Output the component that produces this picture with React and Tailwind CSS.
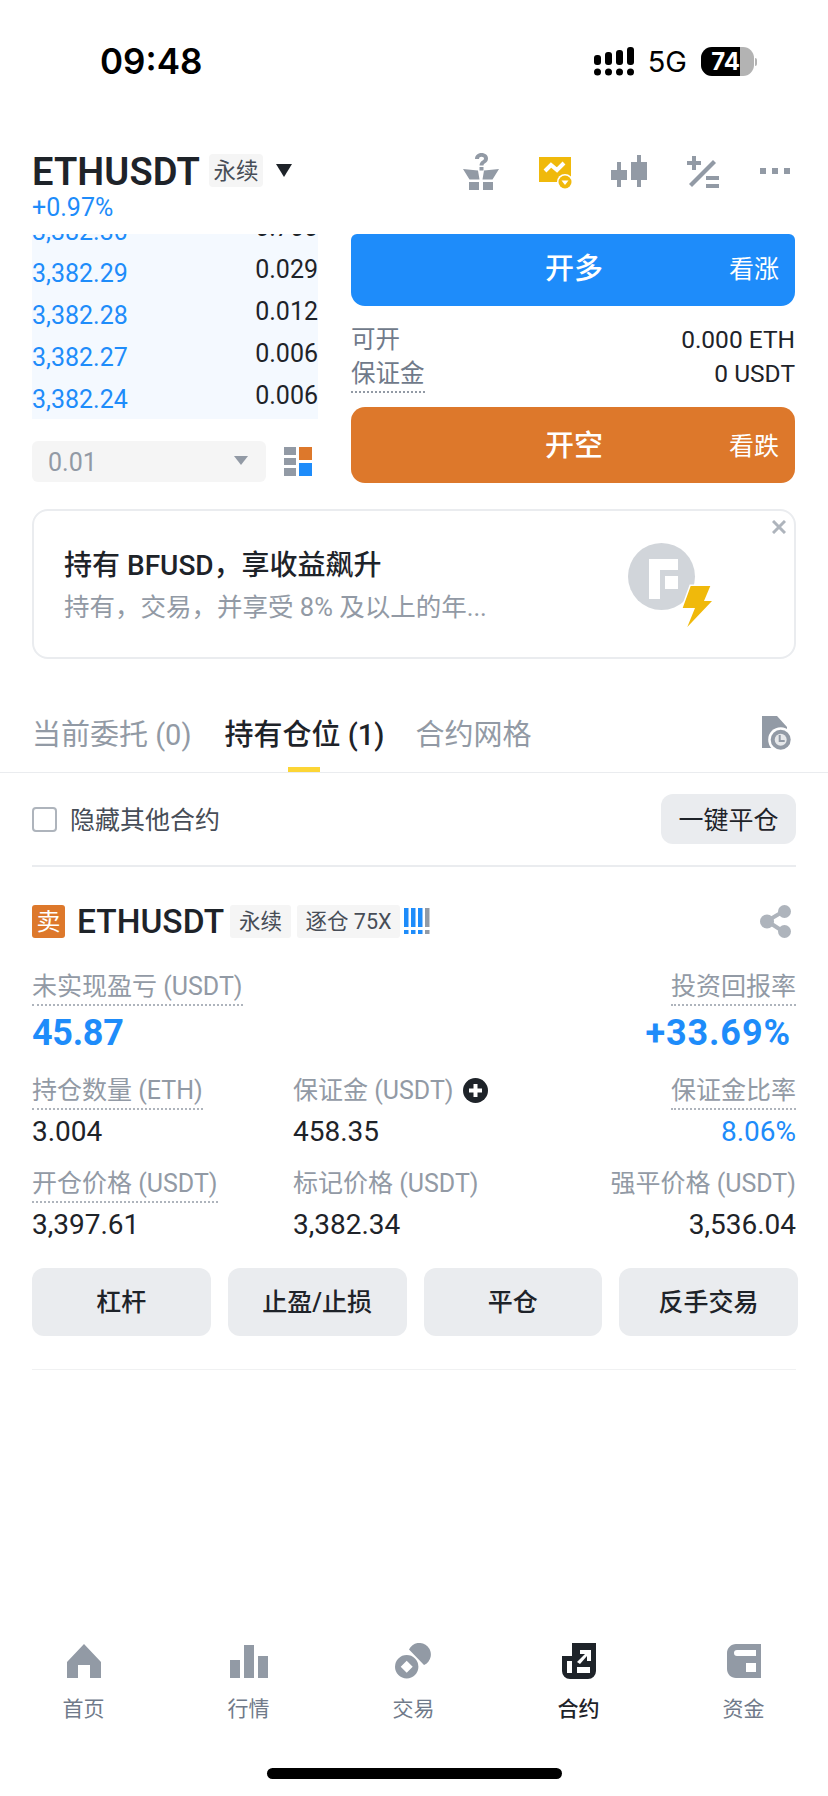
import React from 'react';

const BLUE = 'text-[#1e8cfa]';
const DARK = 'text-[#1e2329]';

function Candles() {
    return (
        <svg width="36" height="32" viewBox="0 0 36 32" fill="#929aa5">
            <path d="M6 7h4v8h6v10h-6v7H6v-7H0V15h6z" />
            <path d="M26 0h4v7h6v18h-6v7h-4v-7h-6V7h6z" />
        </svg>
    );
}

function HeaderIcons() {
    return (
        <div className="flex items-start ml-auto mr-[6px] mt-[-1px]">
            <svg width="36" height="37" viewBox="0 0 36 37" fill="#929aa5">
                <path d="M12 6c0-3.500 2.800-6 6.500-6S25 2.300 25 5.500c0 2.500-1.500 3.700-3 4.800-1 .7-1.500 1.200-1.500 2.300h-4c0-2.500 1.200-3.700 2.700-4.800 1-.7 1.800-1.200 1.800-2.300S20 3.700 18.500 3.700 16 4.600 16 6z" />
                <rect x="16.500" y="14" width="4" height="3.500" />
                <path d="M0 16l15 1.500 1.500 9H6.500zM36 16l-15 1.500-1.500 9h10z" />
                <rect x="6" y="29" width="10" height="8" />
                <rect x="20" y="29" width="10" height="8" />
            </svg>
            <svg className="ml-[40px]" width="34" height="37" viewBox="0 0 34 37">
                <path d="M0 4h32v25H0z" fill="#f0b90b" />
                <path d="M6 18l6-6 6 5 7-7" fill="none" stroke="#fff" strokeWidth="4" />
                <circle cx="26" cy="29" r="8" fill="#fff" />
                <circle cx="26" cy="29" r="6.500" fill="#f0b90b" />
                <path d="M22.500 27.500h7L26 32z" fill="#fff" />
            </svg>
            <div className="ml-[38px] mt-[2px]"><Candles /></div>
            <svg className="ml-[40px] mt-[3px]" width="32" height="32" viewBox="0 0 32 32" fill="#929aa5">
                <path d="M5 0h4v5h5v4H9v5H5V9H0V5h5z" />
                <path d="M2 28L26 4l3 3L5 31z" />
                <rect x="19" y="20" width="13" height="4" />
                <rect x="19" y="28" width="13" height="4" />
            </svg>
            <div className="ml-[41px] mt-[15px] flex gap-[6px]">
                <div className="w-[6px] h-[6px] bg-[#929aa5]" />
                <div className="w-[6px] h-[6px] bg-[#929aa5]" />
                <div className="w-[6px] h-[6px] bg-[#929aa5]" />
            </div>
        </div>
    );
}

function StatusBar() {
    return (
        <div className="h-[154px] flex items-start pt-[47px] pl-[100px] pr-[71px] text-black">
            <div className="text-[35px] leading-[29px] font-semibold font-['Inter',sans-serif]">09:48</div>
            <div className="ml-auto flex items-center h-[29px]">
                <svg width="41" height="29" viewBox="0 0 41 29" fill="#000">
                    <rect x="0" y="8" width="7" height="10" rx="3" />
                    <rect x="11" y="5" width="7" height="13" rx="3" />
                    <rect x="22" y="3" width="7" height="15" rx="3" />
                    <rect x="33" y="0" width="7" height="18" rx="3" />
                    <circle cx="3.500" cy="25" r="3.500" />
                    <circle cx="14.500" cy="25" r="3.500" />
                    <circle cx="25.500" cy="25" r="3.500" />
                    <circle cx="36.500" cy="25" r="3.500" />
                </svg>
                <div className="ml-[13px] text-[29px] font-['Inter',sans-serif]">5G</div>
                <div className="ml-[14px] w-[53px] h-[29px] rounded-[11px] overflow-hidden flex bg-[#b3b3b3]">
                    <div className="w-[39px] h-full bg-black text-white text-[24px] leading-[29px] font-bold font-['Inter',sans-serif] text-right">74</div>
                </div>
                <div className="ml-[1px] w-[2px] h-[8px] rounded-r bg-[#b3b3b3]" />
            </div>
        </div>
    );
}

function Header() {
    return (
        <div className="h-[80px] flex items-start px-[32px]">
            <div>
                <div className="flex items-center h-[33px]">
                    <div className={`pt-[3px] text-[38px] font-semibold tracking-[0.1px] ${DARK}`}>ETHUSDT</div>
                    <div className="ml-[9px] pt-[2px] h-[33px] w-[54px] rounded-[4px] bg-[#f5f5f5] flex items-center justify-center text-[22.5px] text-[#474d57]">永续</div>
                    <svg className="ml-[13px]" width="16" height="13" viewBox="0 0 16 13"><path d="M0 0h16L8 13z" fill="#1e2329" /></svg>
                </div>
                <div className={`text-[25px] leading-[28px] mt-[7px] ${BLUE}`}>+0.97%</div>
            </div>
            <HeaderIcons />
        </div>
    );
}

const rows = [
    { price: '3,382.30', qty: '0.700', first: true },
    { price: '3,382.29', qty: '0.029' },
    { price: '3,382.28', qty: '0.012' },
    { price: '3,382.27', qty: '0.006' },
    { price: '3,382.24', qty: '0.006' },
];

function OrderBook() {
    return (
        <div className="w-[286px]">
            <div className="h-[185px] overflow-hidden bg-[#f4f9ff]">
                {rows.map((row) => (
                    <div key={row.price} className={`h-[42px] flex justify-between text-[25px] leading-[28px] ${row.first ? 'mt-[-20px]' : ''}`}>
                        <div className={`pt-[4px] ${BLUE}`}>{row.price}</div>
                        <div className={DARK}>{row.qty}</div>
                    </div>
                ))}
            </div>
            <div className="mt-[22px] flex items-center">
                <div className="w-[234px] h-[41px] pt-[2px] rounded-[6px] bg-[#f5f5f5] flex items-center px-[16px] text-[25px] text-[#929aa5]">
                    0.01
                    <svg className="ml-auto mr-[2px] mb-[5px]" width="14" height="9" viewBox="0 0 14 9"><path d="M0 0h14L7 9z" fill="#929aa5" /></svg>
                </div>
                <svg className="ml-[18px]" width="28" height="29" viewBox="0 0 28 29">
                    <rect x="0" y="0" width="12" height="8" fill="#929aa5" />
                    <rect x="0" y="11" width="12" height="7" fill="#929aa5" />
                    <rect x="0" y="21" width="12" height="8" fill="#929aa5" />
                    <rect x="15" y="0" width="13" height="13" fill="#dd782b" />
                    <rect x="15" y="16" width="13" height="13" fill="#1e8cfa" />
                </svg>
            </div>
        </div>
    );
}

function TradeButton({ label, hint, className }) {
    return (
        <div className={`flex items-center text-white ${className}`}>
            <div className="w-[158px]" />
            <div className="w-[130px] text-center text-[29px] font-medium">{label}</div>
            <div className="ml-auto mr-[16px] text-[25px]">{hint}</div>
        </div>
    );
}

function OrderForm() {
    return (
        <div className="ml-[33px] w-[444px]">
            <TradeButton label="开多" hint="看涨" className="h-[72px] rounded-b-[14px] rounded-t-[6px] bg-[#1e8cfa]" />
            <div className="h-[101px] pt-[17px] text-[24.500px] leading-[34px]">
                <div className="flex justify-between">
                    <span className="text-[#707a8a]">可开</span>
                    <span className={DARK}>0.000 ETH</span>
                </div>
                <div className="flex justify-between">
                    <span className="text-[#707a8a] h-[36px] border-b-2 border-dotted border-[#929aa5]">保证金</span>
                    <span className={DARK}>0 USDT</span>
                </div>
            </div>
            <TradeButton label="开空" hint="看跌" className="h-[76px] pt-[3px] rounded-[14px] bg-[#dd782b]" />
        </div>
    );
}

function Banner() {
    return (
        <div className="relative mx-[32px] mt-[26px] h-[150px] w-[764px] rounded-[16px] border-2 border-[#eaecef] flex items-center pl-[30px]">
            <div className="pt-[3px]">
                <div className={`text-[28px] leading-[38px] font-medium ${DARK}`}>持有 BFUSD，享收益飙升</div>
                <div className="mt-[5px] text-[25.5px] leading-[34px] text-[#929aa5]">持有，交易，并享受 8% 及以上的年...</div>
            </div>
            <svg className="ml-auto mr-[81px] mt-[3px]" width="85" height="85" viewBox="0 0 85 85">
                <circle cx="33.500" cy="33.500" r="33.500" fill="#d1d5da" />
                <path d="M21 16h29v11H32v29H21z" fill="#fff" />
                <rect x="37" y="33" width="13" height="13" fill="#fff" />
                <path d="M62.700 43H82.300L76 58h8L59.300 84 67 65H54.700z" fill="#f0b90b" stroke="#fff" strokeWidth="3" paintOrder="stroke" />
            </svg>
            <svg className="absolute right-[8px] top-[9px]" width="14" height="14" viewBox="0 0 14 14">
                <path d="M1 1l12 12M13 1L1 13" stroke="#aeb4bc" strokeWidth="3" />
            </svg>
        </div>
    );
}

function Tabs() {
    return (
        <div className="mt-[56px] border-b border-[#eaecef] h-[58px] px-[32px] flex items-start">
            <div className="text-[29px] leading-[40px] text-[#929aa5]">当前委托 (0)</div>
            <div className="ml-[33px] flex flex-col items-center">
                <div className={`text-[29px] leading-[40px] font-medium ${DARK}`}>持有仓位 (1)</div>
                <div className="mt-[12px] w-[32px] h-[5px] bg-[#fcd535]" />
            </div>
            <div className="ml-[31px] text-[29px] leading-[40px] text-[#929aa5]">合约网格</div>
            <svg className="ml-auto mr-[4px] mt-[1px]" width="30" height="34" viewBox="0 0 30 34" fill="#929aa5">
                <path d="M0 0h15l10 11v21H0z" />
                <circle cx="18.700" cy="23.700" r="12.500" fill="#fff" />
                <circle cx="18.700" cy="23.700" r="10" />
                <circle cx="18.700" cy="23.700" r="6" fill="#e6e8ea" />
                <path d="M17.700 19v6h5" fill="none" stroke="#929aa5" strokeWidth="2" />
            </svg>
        </div>
    );
}

function PositionToolbar() {
    return (
        <div className="mx-[32px] h-[94px] border-b-2 border-[#eaecef] flex items-center">
            <div className="w-[25px] h-[25px] rounded-[4px] border-2 border-[#aeb4bc]" />
            <div className="ml-[13px] pt-[3px] text-[25px] text-[#474d57]">隐藏其他合约</div>
            <div className={`ml-auto w-[135px] h-[50px] pt-[3px] rounded-[12px] bg-[#eaecef] flex items-center justify-center text-[25px] ${DARK}`}>一键平仓</div>
        </div>
    );
}

function Tag({ children, className }) {
    return <div className={`h-[33px] pt-[1px] rounded-[3px] bg-[#f5f5f5] flex items-center justify-center text-[21.5px] text-[#474d57] ${className}`}>{children}</div>;
}

function PositionTitle() {
    return (
        <div className="flex items-center h-[33px]">
            <div className="w-[33px] h-[33px] rounded-[3px] bg-[#dd782b] text-white text-[24px] flex items-center justify-center">卖</div>
            <div className={`ml-[12px] pt-[1px] w-[153px] text-[33.5px] font-medium ${DARK}`}>ETHUSDT</div>
            <Tag className="w-[61px]">永续</Tag>
            <Tag className="ml-[6px] w-[103px]">逐仓 75X</Tag>
            <svg className="ml-[4px]" width="26" height="27" viewBox="0 0 26 27" fill="#1e8cfa">
                <rect x="0" y="0" width="4.500" height="19" /><rect x="0" y="22" width="4.500" height="4" />
                <rect x="7" y="0" width="4.500" height="19" /><rect x="7" y="22" width="4.500" height="4" />
                <rect x="14" y="0" width="4.500" height="19" /><rect x="14" y="22" width="4.500" height="4" />
                <rect x="21" y="0" width="4.500" height="19" fill="#929aa5" /><rect x="21" y="22" width="4.500" height="4" fill="#929aa5" />
            </svg>
            <svg className="ml-auto mr-[5px]" width="31" height="33" viewBox="0 0 31 33" fill="#aeb4bc">
                <path d="M24 6L7 16l17 11" fill="none" stroke="#aeb4bc" strokeWidth="4" />
                <circle cx="24.500" cy="6.500" r="6.500" />
                <circle cx="7" cy="16.500" r="7" />
                <circle cx="24.500" cy="26.500" r="6.500" />
            </svg>
        </div>
    );
}

function Label({ children, dotted }) {
    return (
        <div className={`w-fit h-[34px] text-[25px] leading-[30px] text-[#929aa5] ${dotted ? 'border-b-2 border-dotted border-[#aeb4bc]' : ''}`}>
            {children}
        </div>
    );
}

function Value({ children, color = DARK }) {
    return <div className={`mt-[6px] text-[28px] leading-[32px] ${color}`}>{children}</div>;
}

function Position() {
    return (
        <div className="mx-[32px]">
            <div className="pt-[38px]"><PositionTitle /></div>
            <div className="mt-[34px] flex justify-between">
                <div>
                    <Label dotted>未实现盈亏 (USDT)</Label>
                    <div className={`mt-[4px] text-[36px] leading-[46px] font-bold tracking-[-0.3px] ${BLUE}`}>45.87</div>
                </div>
                <div className="flex flex-col items-end">
                    <Label dotted>投资回报率</Label>
                    <div className={`mt-[4px] mr-[5px] text-[36px] leading-[46px] font-bold tracking-[0.9px] ${BLUE}`}>+33.69%</div>
                </div>
            </div>
            <div className="mt-[20px] grid grid-cols-[261px_1fr_auto]">
                <div>
                    <Label dotted>持仓数量 (ETH)</Label>
                    <Value>3.004</Value>
                </div>
                <div>
                    <div className="flex items-start h-[34px]">
                        <Label>保证金 (USDT)</Label>
                        <svg className="ml-[9px] mt-[2px]" width="25" height="25" viewBox="0 0 25 25">
                            <circle cx="12.500" cy="12.500" r="12.500" fill="#1e2329" />
                            <path d="M12.500 6v13M6 12.500h13" stroke="#fff" strokeWidth="4" />
                        </svg>
                    </div>
                    <Value>458.35</Value>
                </div>
                <div className="flex flex-col items-end">
                    <Label dotted>保证金比率</Label>
                    <Value color={BLUE}>8.06%</Value>
                </div>
            </div>
            <div className="mt-[21px] grid grid-cols-[261px_1fr_auto]">
                <div>
                    <Label dotted>开仓价格 (USDT)</Label>
                    <Value>3,397.61</Value>
                </div>
                <div>
                    <Label>标记价格 (USDT)</Label>
                    <Value>3,382.34</Value>
                </div>
                <div className="flex flex-col items-end">
                    <Label>强平价格 (USDT)</Label>
                    <Value>3,536.04</Value>
                </div>
            </div>
            <div className="mt-[27px] w-[766px] grid grid-cols-4 gap-x-[17px]">
                {['杠杆', '止盈/止损', '平仓', '反手交易'].map((label) => (
                    <div key={label} className={`h-[68px] pt-[2px] rounded-[12px] bg-[#eaecef] flex items-center justify-center text-[25px] font-medium ${DARK}`}>{label}</div>
                ))}
            </div>
            <div className="mt-[33px] h-[1px] bg-[#f0f1f2]" />
        </div>
    );
}

function NavItem({ label, active, children }) {
    return (
        <div className="w-[165px] flex flex-col items-center">
            <div className="h-[38px] flex items-center justify-center">{children}</div>
            <div className={`mt-[15px] text-[21px] leading-[28px] ${active ? `${DARK} font-medium` : 'text-[#707a8a]'}`}>{label}</div>
        </div>
    );
}

function BottomNav() {
    return (
        <div className="mt-auto">
            <div className="flex pl-[1px]">
                <NavItem label="首页">
                    <svg width="34" height="34" viewBox="0 0 34 34" fill="#929aa5"><path fillRule="evenodd" d="M17 0l17 18v16H23V21H11v13H0V18z" /></svg>
                </NavItem>
                <NavItem label="行情">
                    <svg width="38" height="33" viewBox="0 0 38 33" fill="#929aa5">
                        <rect x="0" y="15" width="10" height="18" />
                        <rect x="14" y="0" width="10" height="33" />
                        <rect x="28" y="11" width="10" height="22" />
                    </svg>
                </NavItem>
                <NavItem label="交易">
                    <svg width="37" height="36" viewBox="0 0 37 36" fill="#929aa5">
                        <path fillRule="evenodd" d="M11.700 12a11.700 11.700 0 1 1 0 23.400 11.700 11.700 0 0 1 0-23.400zm0 5.700l-6 6 6 6 6-6z" />
                        <path d="M14 6.500A11.500 11.500 0 1 1 29 22z" />
                    </svg>
                </NavItem>
                <NavItem label="合约" active>
                    <svg width="34" height="36" viewBox="0 0 34 36" fill="#1e2329">
                        <path fillRule="evenodd" d="M10 0h24v28a8 8 0 0 1-8 8H8a8 8 0 0 1-8-8V13h10zM5 18v12h5V18zM15 24v6h13v-6zM15 19l8-8h-5V7h11v11h-4v-5l-7 8z" />
                    </svg>
                </NavItem>
                <NavItem label="资金">
                    <svg width="34" height="34" viewBox="0 0 34 34" fill="#929aa5">
                        <path fillRule="evenodd" d="M9 0h25v34H9c-5 0-9-4-9-9V9c0-5 4-9 9-9zM10 6a3 3 0 0 0 0 6h19V6zM19 19v9h10v-9z" />
                    </svg>
                </NavItem>
            </div>
            <div className="mt-[45px] mb-[17px] mx-auto w-[295px] h-[11px] rounded-full bg-black" />
        </div>
    );
}

export default function App() {
    return (
        <div className="relative w-[828px] h-[1796px] bg-white overflow-hidden flex flex-col font-['Roboto','Noto_Sans_CJK_SC',sans-serif]">
            <StatusBar />
            <Header />
            <div className="flex px-[32px]">
                <OrderBook />
                <OrderForm />
            </div>
            <Banner />
            <Tabs />
            <PositionToolbar />
            <Position />
            <BottomNav />
        </div>
    );
}
